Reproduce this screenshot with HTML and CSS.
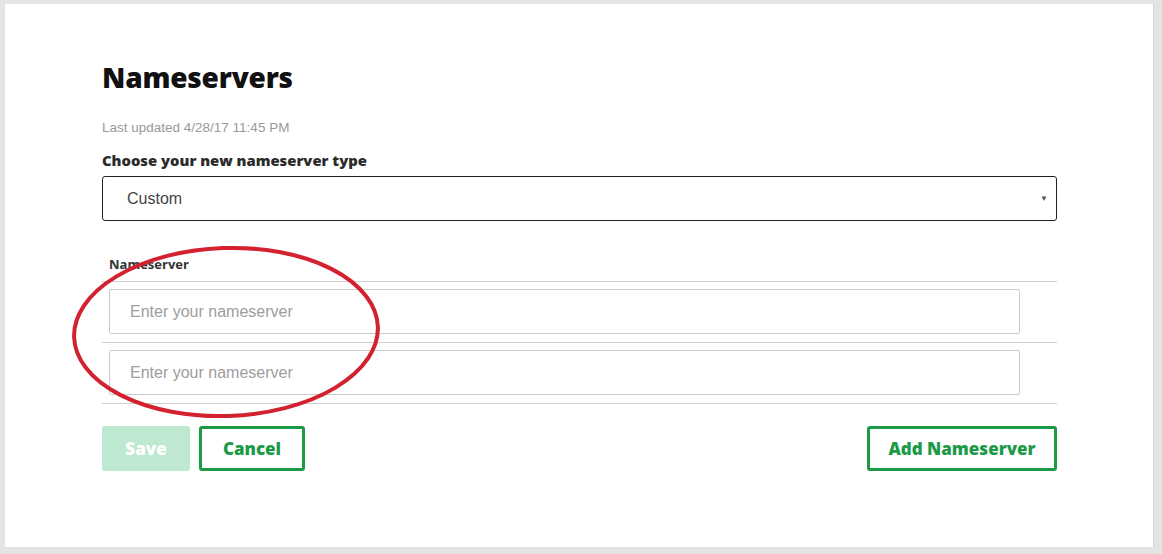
FILE: index.html
```html
<!DOCTYPE html>
<html>
<head>
<meta charset="utf-8">
<link rel="stylesheet" href="styles.css">
</head>
<body>
<div class="panel">
  <h1 class="title">Nameservers</h1>
  <div class="updated">Last updated 4/28/17 11:45 PM</div>
  <div class="field-label">Choose your new nameserver type</div>
  <div class="select">
    <span class="select-value">Custom</span>
    <span class="select-arrow">&#9660;</span>
  </div>
  <div class="ns-table">
    <div class="ns-head">Nameserver</div>
    <div class="ns-row"><div class="ns-input">Enter your nameserver</div></div>
    <div class="ns-row"><div class="ns-input">Enter your nameserver</div></div>
  </div>
  <div class="actions">
    <div class="btn btn-save">Save</div>
    <div class="btn btn-outline btn-cancel">Cancel</div>
    <div class="spacer"></div>
    <div class="btn btn-outline btn-add">Add Nameserver</div>
  </div>
</div>
<svg class="annotation" width="1162" height="554" viewBox="0 0 1162 554">
  <ellipse cx="226" cy="332" rx="152" ry="84" fill="none" stroke="#d3212f" stroke-width="4" transform="rotate(-2 226 332)"/>
</svg>
</body>
</html>
```
FILE: styles.css
```css
html, body {
  margin: 0;
  padding: 0;
}
body {
  background: #e4e4e4;
  width: 1162px;
  height: 554px;
  overflow: hidden;
  position: relative;
  font-family: "Liberation Sans", Arial, sans-serif;
}
.panel {
  margin: 4px 0 0 5px;
  width: 1148px;
  height: 543px;
  box-sizing: border-box;
  background: #fff;
  padding: 55px 96px 0 97px;
  box-shadow: 1px 0 0 #d4d4d4;
}
.title {
  margin: 0;
  font-family: "Open Sans", sans-serif;
  font-weight: 800;
  font-size: 28px;
  line-height: 36px;
  color: #111;
  letter-spacing: -0.2px;
}
.updated {
  margin-top: 25px;
  font-size: 13.5px;
  line-height: 16px;
  color: #9a9a9a;
}
.field-label {
  margin-top: 14px;
  font-family: "Open Sans", sans-serif;
  font-weight: 800;
  font-size: 14.8px;
  line-height: 20px;
  color: #2b2b2b;
}
.select {
  margin-top: 6px;
  height: 45px;
  box-sizing: border-box;
  border: 1px solid #222;
  border-radius: 3px;
  display: flex;
  align-items: center;
  padding: 0 8px 0 24px;
}
.select-value {
  flex: 1;
  font-size: 16px;
  color: #444;
}
.select-arrow {
  font-size: 8px;
  color: #555;
}
.ns-table {
  margin-top: 35px;
}
.ns-head {
  padding: 0 0 9px 7px;
  font-family: "Open Sans", sans-serif;
  font-weight: 700;
  font-size: 13px;
  line-height: 16px;
  color: #333;
}
.ns-row {
  border-top: 1px solid #cfcfcf;
  padding: 7px 37px 8px 7px;
}
.ns-row:last-child {
  border-bottom: 1px solid #cfcfcf;
}
.ns-input {
  height: 45px;
  box-sizing: border-box;
  border: 1px solid #cacaca;
  border-radius: 2px;
  padding-left: 20px;
  display: flex;
  align-items: center;
  font-size: 16px;
  color: #9d9d9d;
}
.actions {
  margin-top: 22px;
  display: flex;
  gap: 9px;
}
.spacer {
  flex: 1;
}
.btn {
  height: 45px;
  box-sizing: border-box;
  border-radius: 3px;
  display: flex;
  align-items: center;
  justify-content: center;
  font-family: "Open Sans", sans-serif;
  font-weight: 800;
  font-size: 17px;
}
.btn-save {
  width: 88px;
  background: #bfe8d0;
  color: #fff;
}
.btn-outline {
  border: 3px solid #1d9a48;
  color: #1d9a48;
  background: #fff;
}
.btn-cancel {
  width: 106px;
}
.btn-add {
  width: 190px;
}
.annotation {
  position: absolute;
  left: 0;
  top: 0;
  pointer-events: none;
}
```
